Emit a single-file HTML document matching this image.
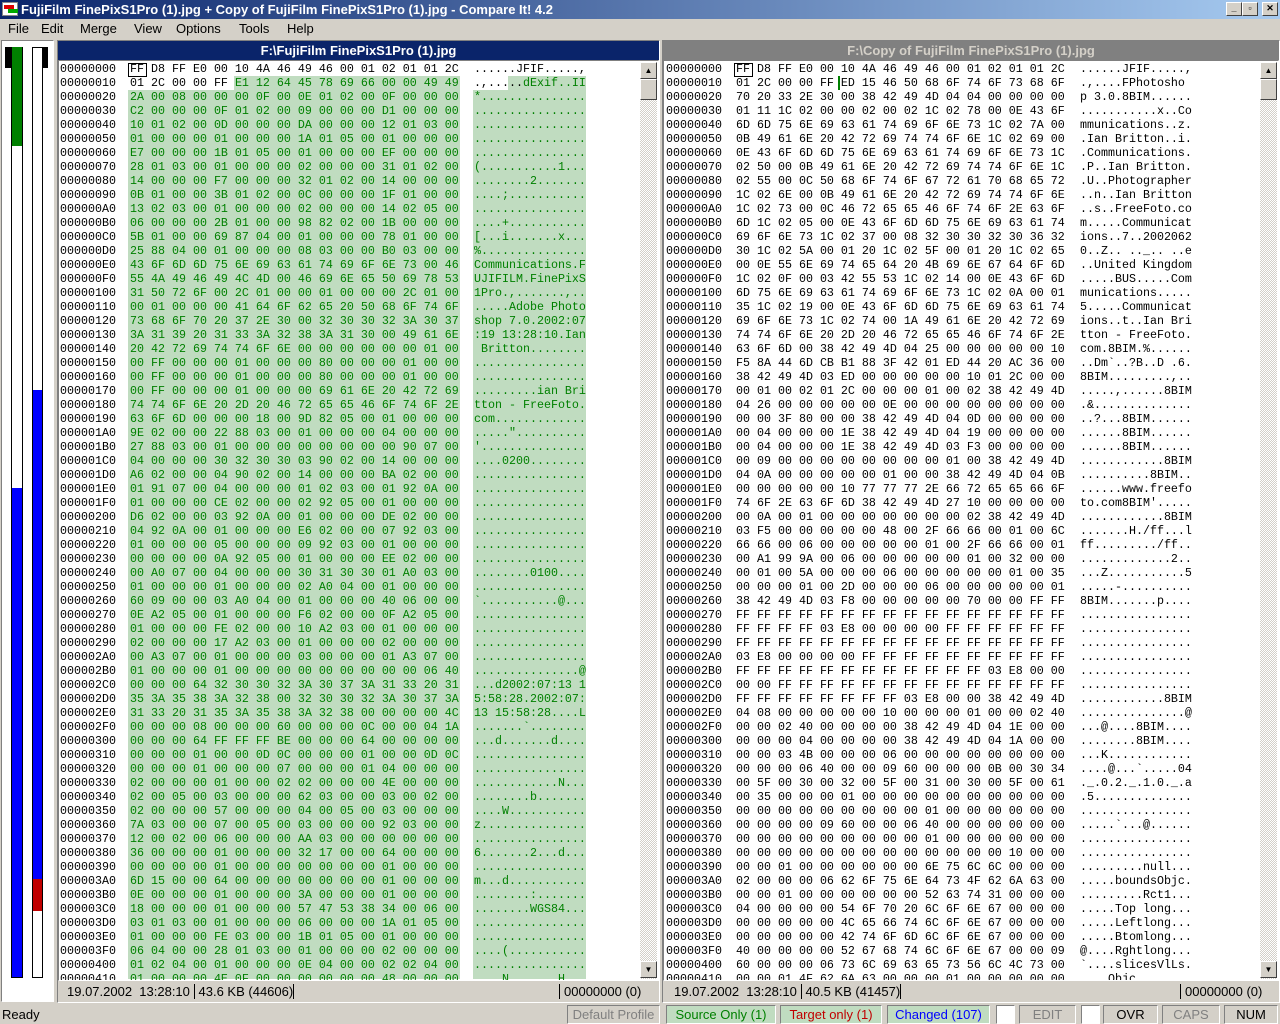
<!DOCTYPE html>
<html><head><meta charset="utf-8"><style>
*{margin:0;padding:0;box-sizing:border-box}
body{width:1280px;height:1024px;background:#d4d0c8;font-family:"Liberation Sans",sans-serif;font-size:13px;position:relative;overflow:hidden}
.a{position:absolute}
.title{left:0;top:0;width:1280px;height:19px;background:linear-gradient(90deg,#0a246a,#a6caf0);color:#fff;font-weight:bold;font-size:13px;line-height:19px}
.tb{top:2px;width:16px;height:14px;background:#d4d0c8;border:1px solid;border-color:#fff #404040 #404040 #fff;font-size:9px;color:#000;text-align:center;line-height:11px;font-weight:bold}
.menu span{position:absolute;top:21px}
pre{font-family:"Liberation Mono",monospace;font-size:11.67px;line-height:14px;position:absolute;white-space:pre}
.g{color:#008000}
.pane{background:#fff;border:1px solid;border-color:#808080 #fff #fff #808080}
.sb{width:17px;background:repeating-conic-gradient(#d4d0c8 0 25%,#fff 0 50%) 0 0/2px 2px}
.btn{background:#d4d0c8;border:1px solid;border-color:#fff #404040 #404040 #fff;width:17px;height:17px;font-size:8px;text-align:center;line-height:15px}
.sp{top:1005px;height:19px;border:1px solid;border-color:#808080 #fff #fff #808080;text-align:center;line-height:17px}
</style></head><body>
<div class="a title"><span style="position:absolute;left:2px;top:2px;width:16px;height:14px;background:#fff;border:1px solid #888"></span><span style="position:absolute;left:4px;top:5px;width:10px;height:4px;background:#d00"></span><span style="position:absolute;left:8px;top:9px;width:10px;height:4px;background:#0a0"></span><span style="position:absolute;left:21px">FujiFilm FinePixS1Pro (1).jpg + Copy of FujiFilm FinePixS1Pro (1).jpg - Compare It! 4.2</span></div>
<div class="a tb" style="left:1226px">_</div><div class="a tb" style="left:1242px">▫</div><div class="a tb" style="left:1262px">✕</div>
<div class="menu"><span style="left:8px">File</span><span style="left:41px">Edit</span><span style="left:80px">Merge</span><span style="left:134px">View</span><span style="left:176px">Options</span><span style="left:239px">Tools</span><span style="left:287px">Help</span></div>

<!-- overview -->
<div class="a" style="left:1px;top:40px;width:53px;height:962px;background:#fff;border:1px solid;border-color:#808080 #fff #fff #808080"></div>
<div class="a" style="left:5px;top:47px;width:6px;height:21px;background:#000"></div>
<div class="a" style="left:42px;top:47px;width:6px;height:21px;background:#000"></div>
<div class="a" style="left:11px;top:47px;width:12px;height:931px;border:1px solid #000;background:#fff"></div>
<div class="a" style="left:12px;top:47px;width:10px;height:99px;background:#008000"></div>
<div class="a" style="left:12px;top:488px;width:10px;height:489px;background:#0000ff"></div>
<div class="a" style="left:32px;top:47px;width:11px;height:931px;border:1px solid #000;background:#fff"></div>
<div class="a" style="left:33px;top:390px;width:9px;height:489px;background:#0000ff"></div>
<div class="a" style="left:33px;top:879px;width:9px;height:32px;background:#c00000"></div>

<!-- left pane -->
<div class="a" style="left:57px;top:40px;width:603px;height:963px;border:1px solid;border-color:#808080 #fff #fff #808080"></div>
<div class="a" style="left:58px;top:41px;width:601px;height:19px;background:#0a246a;color:#fff;font-weight:bold;text-align:center;line-height:19px;font-size:13px">F:\FujiFilm FinePixS1Pro (1).jpg</div>
<div class="a pane" style="left:58px;top:60px;width:601px;height:921px"></div>
<div class="a" style="left:234px;top:76px;width:226px;height:14px;background:#c0dcc0"></div>
<div class="a" style="left:128px;top:90px;width:332px;height:889px;background:#c0dcc0"></div>
<div class="a" style="left:508px;top:76px;width:78px;height:14px;background:#c0dcc0"></div>
<div class="a" style="left:473px;top:90px;width:113px;height:889px;background:#c0dcc0"></div>
<div class="a" style="left:128px;top:63px;width:19px;height:14px;border:1px solid #000"></div>
<div class="a" style="left:59px;top:62px;width:580px;height:918px;overflow:hidden">
<pre style="left:1px;top:0">00000000
00000010
00000020
00000030
00000040
00000050
00000060
00000070
00000080
00000090
000000A0
000000B0
000000C0
000000D0
000000E0
000000F0
00000100
00000110
00000120
00000130
00000140
00000150
00000160
00000170
00000180
00000190
000001A0
000001B0
000001C0
000001D0
000001E0
000001F0
00000200
00000210
00000220
00000230
00000240
00000250
00000260
00000270
00000280
00000290
000002A0
000002B0
000002C0
000002D0
000002E0
000002F0
00000300
00000310
00000320
00000330
00000340
00000350
00000360
00000370
00000380
00000390
000003A0
000003B0
000003C0
000003D0
000003E0
000003F0
00000400
00000410</pre>
<pre style="left:71px;top:0">FF D8 FF E0 00 10 4A 46 49 46 00 01 02 01 01 2C
01 2C 00 00 FF <span class="g">E1 12 64 45 78 69 66 00 00 49 49</span><span class="g">
2A 00 08 00 00 00 0F 00 0E 01 02 00 0F 00 00 00
C2 00 00 00 0F 01 02 00 09 00 00 00 D1 00 00 00
10 01 02 00 0D 00 00 00 DA 00 00 00 12 01 03 00
01 00 00 00 01 00 00 00 1A 01 05 00 01 00 00 00
E7 00 00 00 1B 01 05 00 01 00 00 00 EF 00 00 00
28 01 03 00 01 00 00 00 02 00 00 00 31 01 02 00
14 00 00 00 F7 00 00 00 32 01 02 00 14 00 00 00
0B 01 00 00 3B 01 02 00 0C 00 00 00 1F 01 00 00
13 02 03 00 01 00 00 00 02 00 00 00 14 02 05 00
06 00 00 00 2B 01 00 00 98 82 02 00 1B 00 00 00
5B 01 00 00 69 87 04 00 01 00 00 00 78 01 00 00
25 88 04 00 01 00 00 00 08 03 00 00 B0 03 00 00
43 6F 6D 6D 75 6E 69 63 61 74 69 6F 6E 73 00 46
55 4A 49 46 49 4C 4D 00 46 69 6E 65 50 69 78 53
31 50 72 6F 00 2C 01 00 00 01 00 00 00 2C 01 00
00 01 00 00 00 41 64 6F 62 65 20 50 68 6F 74 6F
73 68 6F 70 20 37 2E 30 00 32 30 30 32 3A 30 37
3A 31 39 20 31 33 3A 32 38 3A 31 30 00 49 61 6E
20 42 72 69 74 74 6F 6E 00 00 00 00 00 00 01 00
00 FF 00 00 00 01 00 00 00 80 00 00 00 01 00 00
00 FF 00 00 00 01 00 00 00 80 00 00 00 01 00 00
00 FF 00 00 00 01 00 00 00 69 61 6E 20 42 72 69
74 74 6F 6E 20 2D 20 46 72 65 65 46 6F 74 6F 2E
63 6F 6D 00 00 00 18 00 9D 82 05 00 01 00 00 00
9E 02 00 00 22 88 03 00 01 00 00 00 04 00 00 00
27 88 03 00 01 00 00 00 00 00 00 00 00 90 07 00
04 00 00 00 30 32 30 30 03 90 02 00 14 00 00 00
A6 02 00 00 04 90 02 00 14 00 00 00 BA 02 00 00
01 91 07 00 04 00 00 00 01 02 03 00 01 92 0A 00
01 00 00 00 CE 02 00 00 02 92 05 00 01 00 00 00
D6 02 00 00 03 92 0A 00 01 00 00 00 DE 02 00 00
04 92 0A 00 01 00 00 00 E6 02 00 00 07 92 03 00
01 00 00 00 05 00 00 00 09 92 03 00 01 00 00 00
00 00 00 00 0A 92 05 00 01 00 00 00 EE 02 00 00
00 A0 07 00 04 00 00 00 30 31 30 30 01 A0 03 00
01 00 00 00 01 00 00 00 02 A0 04 00 01 00 00 00
60 09 00 00 03 A0 04 00 01 00 00 00 40 06 00 00
0E A2 05 00 01 00 00 00 F6 02 00 00 0F A2 05 00
01 00 00 00 FE 02 00 00 10 A2 03 00 01 00 00 00
02 00 00 00 17 A2 03 00 01 00 00 00 02 00 00 00
00 A3 07 00 01 00 00 00 03 00 00 00 01 A3 07 00
01 00 00 00 01 00 00 00 00 00 00 00 00 00 06 40
00 00 00 64 32 30 30 32 3A 30 37 3A 31 33 20 31
35 3A 35 38 3A 32 38 00 32 30 30 32 3A 30 37 3A
31 33 20 31 35 3A 35 38 3A 32 38 00 00 00 00 4C
00 00 00 08 00 00 00 60 00 00 00 0C 00 00 04 1A
00 00 00 64 FF FF FF BE 00 00 00 64 00 00 00 00
00 00 00 01 00 00 0D 0C 00 00 00 01 00 00 0D 0C
00 00 00 01 00 00 00 07 00 00 00 01 04 00 00 00
02 00 00 00 01 00 00 02 02 00 00 00 4E 00 00 00
02 00 05 00 03 00 00 00 62 03 00 00 03 00 02 00
02 00 00 00 57 00 00 00 04 00 05 00 03 00 00 00
7A 03 00 00 07 00 05 00 03 00 00 00 92 03 00 00
12 00 02 00 06 00 00 00 AA 03 00 00 00 00 00 00
36 00 00 00 01 00 00 00 32 17 00 00 64 00 00 00
00 00 00 00 01 00 00 00 00 00 00 00 01 00 00 00
6D 15 00 00 64 00 00 00 00 00 00 00 01 00 00 00
0E 00 00 00 01 00 00 00 3A 00 00 00 01 00 00 00
18 00 00 00 01 00 00 00 57 47 53 38 34 00 06 00
03 01 03 00 01 00 00 00 06 00 00 00 1A 01 05 00
01 00 00 00 FE 03 00 00 1B 01 05 00 01 00 00 00
06 04 00 00 28 01 03 00 01 00 00 00 02 00 00 00
01 02 04 00 01 00 00 00 0E 04 00 00 02 02 04 00
01 00 00 00 4E 0F 00 00 00 00 00 00 48 00 00 00</span></pre>
<pre style="left:415px;top:0">......JFIF.....,
.,.....<span class="g">dExif..II</span><span class="g">
*...............
................
................
................
................
(...........1...
........2.......
....;...........
................
....+...........
[...i.......x...
%...............
Communications.F
UJIFILM.FinePixS
1Pro.,.......,..
.....Adobe Photo
shop 7.0.2002:07
:19 13:28:10.Ian
 Britton........
................
................
.........ian Bri
tton - FreeFoto.
com.............
....."..........
'...............
....0200........
................
................
................
................
................
................
................
........0100....
................
`...........@...
................
................
................
................
...............@
...d2002:07:13 1
5:58:28.2002:07:
13 15:58:28....L
.......`........
...d.......d....
................
................
............N...
........b.......
....W...........
z...............
................
6.......2...d...
................
m...d...........
........:.......
........WGS84...
................
................
....(...........
................
....N.......H...</span></pre>
</div>
<div class="a sb" style="left:640px;top:62px;height:917px"></div>
<div class="a btn" style="left:640px;top:62px">▲</div>
<div class="a btn" style="left:640px;top:79px;height:21px"></div>
<div class="a btn" style="left:640px;top:961px">▼</div>
<div class="a" style="left:67px;top:984px">19.07.2002&nbsp;&nbsp;13:28:10 <span style="border-left:1px solid #000;padding-left:4px">43.6 KB (44606)</span> <span style="border-left:1px solid #000"></span></div>
<div class="a" style="left:559px;top:984px;border-left:1px solid #000;padding-left:4px">00000000 (0)</div>

<!-- right pane -->
<div class="a" style="left:662px;top:40px;width:618px;height:963px;border:1px solid;border-color:#808080 #fff #fff #808080"></div>
<div class="a" style="left:663px;top:41px;width:616px;height:19px;background:#808080;color:#d4d0c8;font-weight:bold;text-align:center;line-height:19px;font-size:13px">F:\Copy of FujiFilm FinePixS1Pro (1).jpg</div>
<div class="a pane" style="left:663px;top:60px;width:616px;height:921px"></div>
<div class="a" style="left:734px;top:63px;width:19px;height:14px;border:1px solid #000"></div>
<div class="a" style="left:838px;top:76px;width:2px;height:14px;background:#008000"></div>
<div class="a" style="left:664px;top:62px;width:595px;height:918px;overflow:hidden">
<pre style="left:2px;top:0">00000000
00000010
00000020
00000030
00000040
00000050
00000060
00000070
00000080
00000090
000000A0
000000B0
000000C0
000000D0
000000E0
000000F0
00000100
00000110
00000120
00000130
00000140
00000150
00000160
00000170
00000180
00000190
000001A0
000001B0
000001C0
000001D0
000001E0
000001F0
00000200
00000210
00000220
00000230
00000240
00000250
00000260
00000270
00000280
00000290
000002A0
000002B0
000002C0
000002D0
000002E0
000002F0
00000300
00000310
00000320
00000330
00000340
00000350
00000360
00000370
00000380
00000390
000003A0
000003B0
000003C0
000003D0
000003E0
000003F0
00000400
00000410</pre>
<pre style="left:72px;top:0">FF D8 FF E0 00 10 4A 46 49 46 00 01 02 01 01 2C
01 2C 00 00 FF ED 15 46 50 68 6F 74 6F 73 68 6F
70 20 33 2E 30 00 38 42 49 4D 04 04 00 00 00 00
01 11 1C 02 00 00 02 00 02 1C 02 78 00 0E 43 6F
6D 6D 75 6E 69 63 61 74 69 6F 6E 73 1C 02 7A 00
0B 49 61 6E 20 42 72 69 74 74 6F 6E 1C 02 69 00
0E 43 6F 6D 6D 75 6E 69 63 61 74 69 6F 6E 73 1C
02 50 00 0B 49 61 6E 20 42 72 69 74 74 6F 6E 1C
02 55 00 0C 50 68 6F 74 6F 67 72 61 70 68 65 72
1C 02 6E 00 0B 49 61 6E 20 42 72 69 74 74 6F 6E
1C 02 73 00 0C 46 72 65 65 46 6F 74 6F 2E 63 6F
6D 1C 02 05 00 0E 43 6F 6D 6D 75 6E 69 63 61 74
69 6F 6E 73 1C 02 37 00 08 32 30 30 32 30 36 32
30 1C 02 5A 00 01 20 1C 02 5F 00 01 20 1C 02 65
00 0E 55 6E 69 74 65 64 20 4B 69 6E 67 64 6F 6D
1C 02 0F 00 03 42 55 53 1C 02 14 00 0E 43 6F 6D
6D 75 6E 69 63 61 74 69 6F 6E 73 1C 02 0A 00 01
35 1C 02 19 00 0E 43 6F 6D 6D 75 6E 69 63 61 74
69 6F 6E 73 1C 02 74 00 1A 49 61 6E 20 42 72 69
74 74 6F 6E 20 2D 20 46 72 65 65 46 6F 74 6F 2E
63 6F 6D 00 38 42 49 4D 04 25 00 00 00 00 00 10
F5 8A 44 6D CB B1 88 3F 42 01 ED 44 20 AC 36 00
38 42 49 4D 03 ED 00 00 00 00 00 10 01 2C 00 00
00 01 00 02 01 2C 00 00 00 01 00 02 38 42 49 4D
04 26 00 00 00 00 00 0E 00 00 00 00 00 00 00 00
00 00 3F 80 00 00 38 42 49 4D 04 0D 00 00 00 00
00 04 00 00 00 1E 38 42 49 4D 04 19 00 00 00 00
00 04 00 00 00 1E 38 42 49 4D 03 F3 00 00 00 00
00 09 00 00 00 00 00 00 00 00 01 00 38 42 49 4D
04 0A 00 00 00 00 00 01 00 00 38 42 49 4D 04 0B
00 00 00 00 00 10 77 77 77 2E 66 72 65 65 66 6F
74 6F 2E 63 6F 6D 38 42 49 4D 27 10 00 00 00 00
00 0A 00 01 00 00 00 00 00 00 00 02 38 42 49 4D
03 F5 00 00 00 00 00 48 00 2F 66 66 00 01 00 6C
66 66 00 06 00 00 00 00 00 01 00 2F 66 66 00 01
00 A1 99 9A 00 06 00 00 00 00 00 01 00 32 00 00
00 01 00 5A 00 00 00 06 00 00 00 00 00 01 00 35
00 00 00 01 00 2D 00 00 00 06 00 00 00 00 00 01
38 42 49 4D 03 F8 00 00 00 00 00 70 00 00 FF FF
FF FF FF FF FF FF FF FF FF FF FF FF FF FF FF FF
FF FF FF FF 03 E8 00 00 00 00 FF FF FF FF FF FF
FF FF FF FF FF FF FF FF FF FF FF FF FF FF FF FF
03 E8 00 00 00 00 FF FF FF FF FF FF FF FF FF FF
FF FF FF FF FF FF FF FF FF FF FF FF 03 E8 00 00
00 00 FF FF FF FF FF FF FF FF FF FF FF FF FF FF
FF FF FF FF FF FF FF FF 03 E8 00 00 38 42 49 4D
04 08 00 00 00 00 00 10 00 00 00 01 00 00 02 40
00 00 02 40 00 00 00 00 38 42 49 4D 04 1E 00 00
00 00 00 04 00 00 00 00 38 42 49 4D 04 1A 00 00
00 00 03 4B 00 00 00 06 00 00 00 00 00 00 00 00
00 00 00 06 40 00 00 09 60 00 00 00 0B 00 30 34
00 5F 00 30 00 32 00 5F 00 31 00 30 00 5F 00 61
00 35 00 00 00 01 00 00 00 00 00 00 00 00 00 00
00 00 00 00 00 00 00 00 00 01 00 00 00 00 00 00
00 00 00 00 09 60 00 00 06 40 00 00 00 00 00 00
00 00 00 00 00 00 00 00 00 01 00 00 00 00 00 00
00 00 00 00 00 00 00 00 00 00 00 00 00 10 00 00
00 00 01 00 00 00 00 00 00 6E 75 6C 6C 00 00 00
02 00 00 00 06 62 6F 75 6E 64 73 4F 62 6A 63 00
00 00 01 00 00 00 00 00 00 52 63 74 31 00 00 00
04 00 00 00 00 54 6F 70 20 6C 6F 6E 67 00 00 00
00 00 00 00 00 4C 65 66 74 6C 6F 6E 67 00 00 00
00 00 00 00 00 42 74 6F 6D 6C 6F 6E 67 00 00 00
40 00 00 00 00 52 67 68 74 6C 6F 6E 67 00 00 09
60 00 00 00 06 73 6C 69 63 65 73 56 6C 4C 73 00
00 00 01 4F 62 6A 63 00 00 00 01 00 00 00 00 00</pre>
<pre style="left:416px;top:0">......JFIF.....,
.,....FPhotosho
p 3.0.8BIM......
...........x..Co
mmunications..z.
.Ian Britton..i.
.Communications.
.P..Ian Britton.
.U..Photographer
..n..Ian Britton
..s..FreeFoto.co
m.....Communicat
ions..7..2002062
0..Z.. .._.. ..e
..United Kingdom
.....BUS.....Com
munications.....
5.....Communicat
ions..t..Ian Bri
tton - FreeFoto.
com.8BIM.%......
..Dm`..?B..D .6.
8BIM.........,..
.....,......8BIM
.&..............
..?...8BIM......
......8BIM......
......8BIM......
............8BIM
..........8BIM..
......www.freefo
to.com8BIM'.....
............8BIM
.......H./ff...l
ff........./ff..
.............2..
...Z...........5
.....-..........
8BIM.......p....
................
................
................
................
................
................
............8BIM
...............@
...@....8BIM....
........8BIM....
...K............
....@...`.....04
._.0.2._.1.0._.a
.5..............
................
.....`...@......
................
................
.........null...
.....boundsObjc.
.........Rct1...
.....Top long...
.....Leftlong...
.....Btomlong...
@....Rghtlong...
`....slicesVlLs.
....Objc........</pre>
</div>
<div class="a sb" style="left:1260px;top:62px;height:917px"></div>
<div class="a btn" style="left:1260px;top:62px">▲</div>
<div class="a btn" style="left:1260px;top:79px;height:21px"></div>
<div class="a btn" style="left:1260px;top:961px">▼</div>
<div class="a" style="left:674px;top:984px">19.07.2002&nbsp;&nbsp;13:28:10 <span style="border-left:1px solid #000;padding-left:4px">40.5 KB (41457)</span> <span style="border-left:1px solid #000"></span></div>
<div class="a" style="left:1180px;top:984px;border-left:1px solid #000;padding-left:4px">00000000 (0)</div>

<!-- status bar -->
<div class="a" style="left:2px;top:1007px">Ready</div>
<div class="a sp" style="left:567px;width:93px;color:#808080">Default Profile</div>
<div class="a sp" style="left:666px;width:110px;background:#c0dcc0;color:#008000">Source Only (1)</div>
<div class="a sp" style="left:780px;width:102px;background:#c0dcc0;color:#c00000">Target only (1)</div>
<div class="a sp" style="left:887px;width:103px;background:#c0dcc0;color:#0000ff">Changed (107)</div>
<div class="a sp" style="left:996px;width:19px;background:#fff"></div>
<div class="a sp" style="left:1019px;width:57px;color:#808080">EDIT</div>
<div class="a sp" style="left:1081px;width:19px;background:#fff"></div>
<div class="a sp" style="left:1103px;width:55px">OVR</div>
<div class="a sp" style="left:1162px;width:58px;color:#808080">CAPS</div>
<div class="a sp" style="left:1224px;width:54px">NUM</div>
</body></html>
